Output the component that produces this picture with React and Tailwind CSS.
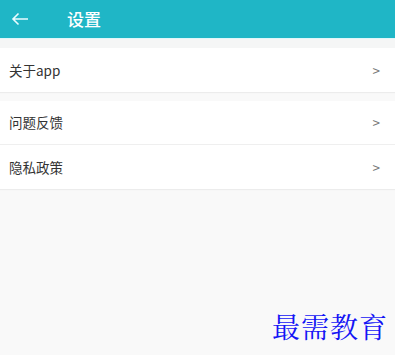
import React from "react";

const font = { fontFamily: '"Noto Sans CJK SC", "Noto Sans", sans-serif' };

function Row({ label, border }) {
  return (
    <div className={`flex h-[44px] items-center justify-between bg-white pl-[9px] pr-[15px] ${border ? "border-b border-[#efefef]" : ""}`}>
      <span className="text-[13.5px] text-[#333]">{label}</span>
      <span className="text-[13.5px] text-[#777]">&gt;</span>
    </div>
  );
}

export default function App() {
  return (
    <div className="relative h-[355px] w-[395px] overflow-hidden bg-[#f9f9f9]" style={font}>
      <div className="flex h-[38px] items-center bg-[#1fb6c6]">
        <svg width="18" height="14" viewBox="0 0 18 14" className="ml-[11px]">
          <path d="M17 7H2M7.5 1.5 2 7l5.5 5.5" fill="none" stroke="#eafcff" strokeWidth="1.6" />
        </svg>
        <span className="ml-[38px] text-[17px] font-medium text-white">设置</span>
      </div>
      <div className="h-px bg-[#dff7fa]" />
      <div className="h-[9px] bg-[#f5f6f6]" />
      <div className="shadow-[0_1px_1px_rgba(0,0,0,0.05)]">
        <Row label="关于app" />
      </div>
      <div className="h-[9px]" />
      <div className="shadow-[0_1px_1px_rgba(0,0,0,0.05)]">
        <Row label="问题反馈" border />
        <Row label="隐私政策" />
      </div>
      <div
        className="absolute left-[272px] top-[305px] text-[28px] tracking-[1px] text-[#1414f5]"
        style={{ fontFamily: '"Noto Serif CJK SC", "Noto Sans CJK SC", serif' }}
      >
        最需教育
      </div>
    </div>
  );
}
